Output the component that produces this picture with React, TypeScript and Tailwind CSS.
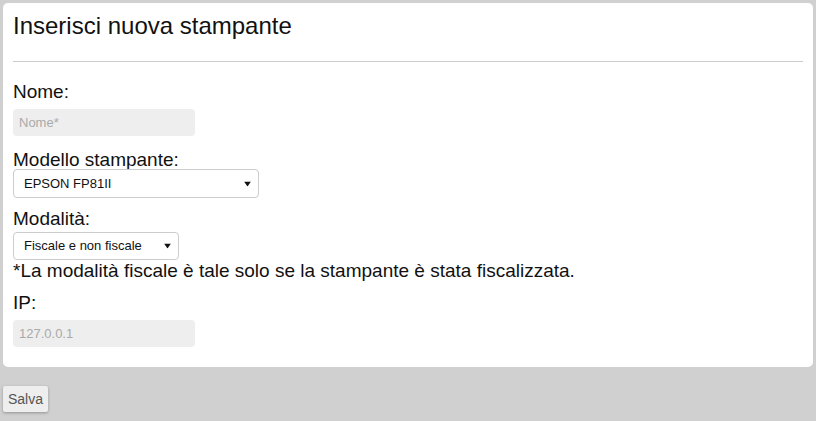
const Arrow = () => (
  <svg
    width="7"
    height="5"
    viewBox="0 0 7 5"
    className="pointer-events-none absolute right-[8px] top-1/2 -translate-y-1/2"
  >
    <path d="M0 0 H7 L3.5 5 Z" fill="#111" />
  </svg>
)

const Label = ({ children }: { children: React.ReactNode }) => (
  <label className="block text-[19px] leading-[22px] text-[#111]">{children}</label>
)

const App = () => {
  return (
    <div
      className="min-h-[421px] bg-[#d0d0d0] p-[3px]"
      style={{ fontFamily: '"Liberation Sans", Arial, sans-serif' }}
    >
      <div className="h-[364px] rounded-[5px] bg-white px-[10px] pt-[9px]">
        <h1 className="text-[24px] leading-[28px] text-[#111]">Inserisci nuova stampante</h1>
        <hr className="mt-[21px] border-0 border-t border-[#cccccc]" />

        <div className="mt-[19px]">
          <Label>Nome:</Label>
          <input
            disabled
            placeholder="Nome*"
            className="mt-[6px] block h-[27px] w-[182px] rounded-[4px] bg-[#eeeeee] px-[6px] text-[13px] placeholder:text-[#aaaaaa]"
          />
        </div>

        <div className="mt-[13px]">
          <Label>Modello stampante:</Label>
          <div className="relative mt-[-2px] w-[246px]">
            <select className="block h-[29px] w-full appearance-none rounded-[4px] border border-[#cccccc] bg-white pl-[10px] text-[13px] text-[#111] outline-none">
              <option>EPSON FP81II</option>
            </select>
            <Arrow />
          </div>
        </div>

        <div className="mt-[10px]">
          <Label>Modalità:</Label>
          <div className="relative mt-[2px] w-[166px]">
            <select className="block h-[28px] w-full appearance-none rounded-[4px] border border-[#cccccc] bg-white pl-[10px] text-[13px] text-[#111] outline-none">
              <option>Fiscale e non fiscale</option>
            </select>
            <Arrow />
          </div>
          <p className="text-[19px] leading-[22px] text-[#111]">
            *La modalità fiscale è tale solo se la stampante è stata fiscalizzata.
          </p>
        </div>

        <div className="mt-[10px]">
          <Label>IP:</Label>
          <input
            disabled
            value="127.0.0.1"
            readOnly
            className="mt-[6px] block h-[27px] w-[182px] rounded-[4px] bg-[#eeeeee] px-[6px] text-[13px] text-[#aaaaaa]"
          />
        </div>
      </div>

      <button className="mt-[19px] h-[26px] rounded-[2px] bg-[#eeeeee] px-[5px] text-[14px] text-[#555555] shadow-[0_1px_3px_rgba(0,0,0,0.3)]">
        Salva
      </button>
    </div>
  )
}

export default App
